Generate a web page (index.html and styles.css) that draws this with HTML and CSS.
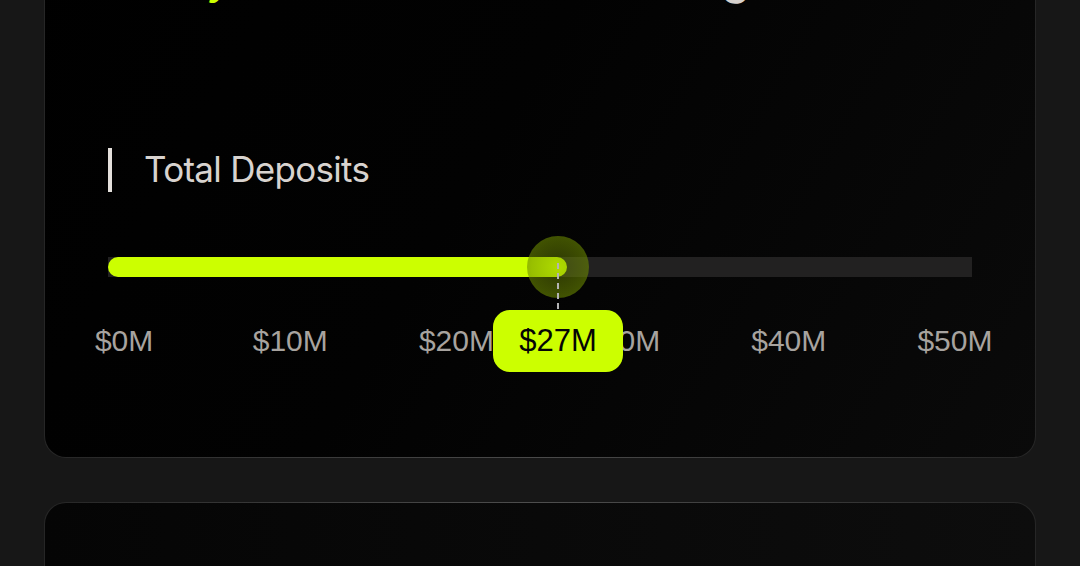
FILE: index.html
```html
<!DOCTYPE html>
<html lang="en">
<head>
    <meta charset="UTF-8">
    <meta name="viewport" content="width=device-width, initial-scale=1.0">
    <title>Total Deposits</title>
    <link rel="stylesheet" href="styles.css">
</head>
<body>
    <div class="page">
        <section class="card card-deposits">
            <h1 class="card-title"><span class="accent">Every</span> dollar now also earning</h1>

            <div class="metric-label">Total Deposits</div>

            <div class="slider">
                <div class="slider-track">
                    <div class="slider-fill" style="width: 53.1%"></div>
                </div>
                <div class="slider-marker" style="left: 52.08%">
                    <div class="slider-thumb"></div>
                    <div class="slider-guide"></div>
                    <div class="slider-badge">$27M</div>
                </div>
            </div>

            <div class="slider-ticks">
                <span>$0M</span>
                <span>$10M</span>
                <span>$20M</span>
                <span>$30M</span>
                <span>$40M</span>
                <span>$50M</span>
            </div>
        </section>

        <section class="card card-next"></section>
    </div>
</body>
</html>
```

FILE: styles.css
```css
* {
    margin: 0;
    padding: 0;
    box-sizing: border-box;
}

body {
    background-color: #171717;
    font-family: Inter, "Liberation Sans", Arial, sans-serif;
    height: 100vh;
    overflow: hidden;
}

.page {
    display: flex;
    flex-direction: column;
    gap: 44px;
    padding: 0 44px;
    margin-top: -117px;
}

.card {
    border: 1.5px solid transparent;
    border-radius: 22px;
    background:
        linear-gradient(120deg, #000 0%, #020202 45%, #0a0a0a 100%) padding-box,
        linear-gradient(90deg, #262626 0%, #4a4a4a 50%, #262626 100%) border-box;
}

.card-deposits {
    padding: 64px 63px 98px;
}

.card-next {
    height: 300px;
    background:
        linear-gradient(90deg, #050505 0%, #0d0d0d 100%) padding-box,
        linear-gradient(90deg, #262626 0%, #4e4e4e 50%, #262626 100%) border-box;
}

.card-title {
    font-size: 48px;
    line-height: 56px;
    font-weight: 400;
    letter-spacing: -0.02em;
    color: #d6d1cd;
}

.card-title .accent {
    color: #ccff00;
}

/* Etiqueta de la métrica */
.metric-label {
    margin-top: 144px;
    height: 44px;
    border-left: 4.5px solid #e4e0dc;
    padding-left: 32px;
    font-size: 35px;
    line-height: 42px;
    letter-spacing: -0.02em;
    color: #d8d3cf;
}

.slider {
    position: relative;
    margin-top: 44px;
    height: 62px;
    display: flex;
    align-items: center;
}

.slider-track {
    width: 100%;
    height: 20px;
    background: #222121;
}

.slider-fill {
    height: 100%;
    background: #ccff00;
    border-radius: 10px;
}

.slider-marker {
    position: absolute;
    top: 0;
    width: 0;
    height: 100%;
}

.slider-thumb {
    position: absolute;
    top: 0;
    left: -31px;
    width: 62px;
    height: 62px;
    border-radius: 50%;
    background: radial-gradient(circle, rgba(120, 150, 0, 0.35) 0%, rgba(110, 140, 0, 0.55) 60%, rgba(100, 130, 0, 0.75) 100%);
}

.slider-guide {
    position: absolute;
    top: 27px;
    left: -1px;
    height: 46px;
    border-left: 2px dashed #b4b4b4;
}

.slider-badge {
    position: absolute;
    top: 74px;
    left: -65px;
    width: 130px;
    height: 62px;
    border-radius: 17px;
    background: #ccff00;
    color: #050505;
    font-family: "Liberation Sans", Arial, sans-serif;
    font-size: 31px;
    line-height: 62px;
    text-align: center;
    z-index: 2;
}

.slider-ticks {
    display: flex;
    margin: 25px -66px 0 -67px;
    font-family: "Liberation Sans", Arial, sans-serif;
    font-size: 30px;
    line-height: 36px;
    color: #a7a39f;
}

.slider-ticks span {
    flex: 1;
    text-align: center;
}
```
